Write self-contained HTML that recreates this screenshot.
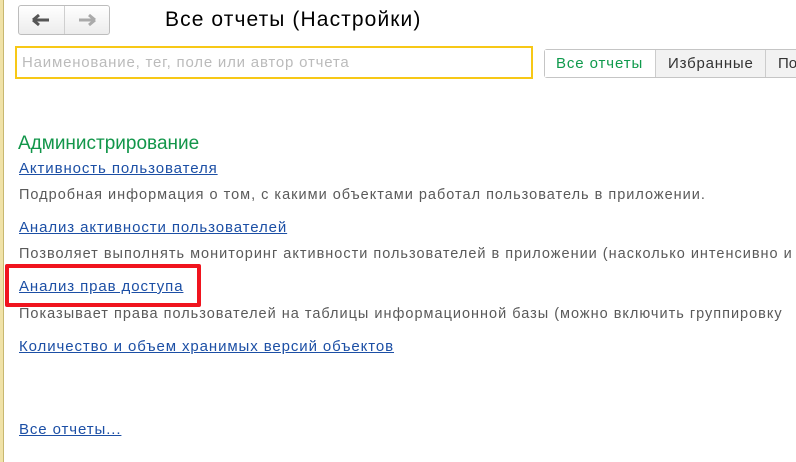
<!DOCTYPE html>
<html><head><meta charset="utf-8"><style>
body{margin:0;width:796px;height:462px;background:#fff;position:relative;overflow:hidden;font-family:"Liberation Sans",Arial,sans-serif}
.a{position:absolute;white-space:nowrap}
.lnk{color:#1c4fa5;text-decoration:underline;font-size:15px;letter-spacing:0.9px}
.desc{color:#5a5a5a;font-size:14.5px;letter-spacing:1px}
</style></head><body>
<div class="a" style="left:0;top:0;width:3px;height:462px;background:#f0e2a8;border-right:1px solid #c8b870"></div>
<div class="a" style="left:18px;top:5px;width:90px;height:28px;border:1px solid #bdbdbd;border-radius:3px;background:linear-gradient(#fff,#ececec)"></div>
<div class="a" style="left:64px;top:6px;width:1px;height:28px;background:#cfcfcf"></div>
<svg class="a" style="left:31px;top:12px" width="20" height="16"><path d="M2 8H18M2 8L8 3M2 8L8 13" stroke="#555" stroke-width="3" fill="none"/></svg>
<svg class="a" style="left:77px;top:12px" width="20" height="16"><path d="M18 8H2M18 8L12 3M18 8L12 13" stroke="#aaa" stroke-width="3" fill="none"/></svg>
<div class="a" style="left:165px;top:8px;font-size:21px;color:#000;letter-spacing:1.1px">Все отчеты (Настройки)</div>
<div class="a" style="left:15px;top:46px;width:514px;height:29px;border:2px solid #f7c816"></div>
<div class="a" style="left:22px;top:54px;font-size:15px;color:#bbb;letter-spacing:0.8px">Наименование, тег, поле или автор отчета</div>
<div class="a" style="left:544px;top:49px;width:260px;height:27px;border:1px solid #c5c5c5;border-radius:3px;background:#f2f2f2"></div>
<div class="a" style="left:545px;top:50px;width:110px;height:27px;background:#fff"></div>
<div class="a" style="left:655px;top:50px;width:1px;height:27px;background:#ccc"></div>
<div class="a" style="left:765px;top:50px;width:1px;height:27px;background:#ccc"></div>
<div class="a" style="left:556px;top:55px;font-size:15px;color:#0f9a4c;letter-spacing:0.9px">Все отчеты</div>
<div class="a" style="left:668px;top:55px;font-size:15px;color:#333;letter-spacing:0.8px">Избранные</div>
<div class="a" style="left:778px;top:55px;font-size:15px;color:#333">По</div>
<div class="a" style="left:18px;top:133px;font-size:19px;color:#12964a">Администрирование</div>
<div class="a lnk" style="left:19px;top:160px">Активность пользователя</div>
<div class="a desc" style="left:19px;top:187px">Подробная информация о том, с какими объектами работал пользователь в приложении.</div>
<div class="a lnk" style="left:19px;top:219px">Анализ активности пользователей</div>
<div class="a desc" style="left:19px;top:246px">Позволяет выполнять мониторинг активности пользователей в приложении (насколько интенсивно и</div>
<div class="a" style="left:5px;top:264px;width:188px;height:35px;border:4px solid #f0141e;border-radius:2px"></div>
<div class="a lnk" style="left:19px;top:278px">Анализ прав доступа</div>
<div class="a desc" style="left:19px;top:306px">Показывает права пользователей на таблицы информационной базы (можно включить группировку</div>
<div class="a lnk" style="left:19px;top:338px">Количество и объем хранимых версий объектов</div>
<div class="a lnk" style="left:19px;top:421px">Все отчеты...</div>
</body></html>
